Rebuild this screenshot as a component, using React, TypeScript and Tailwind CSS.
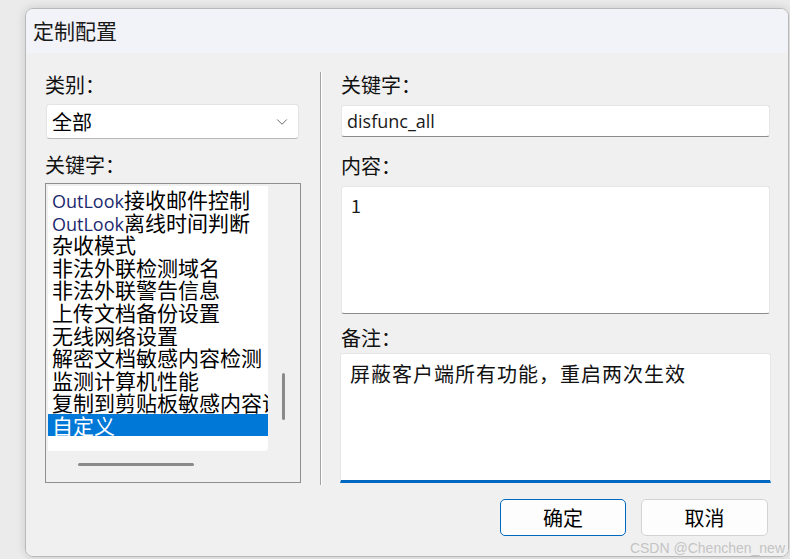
import { ChevronDown } from 'lucide-react';

const listItems: { latin?: string; text: string }[] = [
  { latin: 'OutLook', text: '接收邮件控制' },
  { latin: 'OutLook', text: '离线时间判断' },
  { text: '杂收模式' },
  { text: '非法外联检测域名' },
  { text: '非法外联警告信息' },
  { text: '上传文档备份设置' },
  { text: '无线网络设置' },
  { text: '解密文档敏感内容检测' },
  { text: '监测计算机性能' },
  { text: '复制到剪贴板敏感内容识别' },
];

function Label({ children, className = '' }: { children: React.ReactNode; className?: string }) {
  return <div className={`h-[26px] leading-[26px] text-[20px] text-[#111] ${className}`}>{children}</div>;
}

export default function App() {
  return (
    <div className="relative w-[790px] h-[559px] overflow-hidden bg-[#ebebeb] font-['Noto_Sans_CJK_SC',sans-serif]">
      <div className="ml-[25px] mt-[8px] w-[764px] h-[549px] rounded-[8px] border border-[#b9b9b9] overflow-hidden flex flex-col shadow-[0_0_10px_rgba(0,0,0,0.15)]">
        {/* Title bar */}
        <div className="h-[44px] shrink-0 bg-[#f1f3f8] pl-[7px] flex items-center text-[21px] text-[#1a1a1a]">
          定制配置
        </div>

        {/* Body */}
        <div className="flex-1 bg-[#f0f0f0] pl-[19px] pt-[19px] flex items-start">
          {/* Left column */}
          <div className="w-[256px] flex flex-col">
            <Label>类别：</Label>
            <div className="mt-[6px] ml-[1px] w-[253px] h-[35px] bg-white border border-[#e3e3e3] border-b-[#b8b8b8] rounded-[4px] flex items-center justify-between pl-[5px] pr-[7px]">
              <span className="text-[20px] text-black">全部</span>
              <ChevronDown size={18} strokeWidth={1.3} className="text-[#666]" />
            </div>
            <Label className="mt-[13px]">关键字：</Label>
            <div className="mt-[5px] h-[300px] border border-[#8f8f8f] bg-[#f0f0f0] p-[2px] flex flex-col">
              <div className="flex h-[265px]">
                <div className="w-[220px] bg-white rounded-br-[4px] overflow-hidden">
                  <div className="pt-[2px]">
                    {listItems.map((it, i) => (
                      <div key={i} className="h-[22.6px] leading-[22.6px] whitespace-nowrap text-[21px] text-black pl-[4px]">
                        {it.latin && <span className="font-['Open_Sans',sans-serif] text-[18px] text-[#1c2a6e]">{it.latin}</span>}
                        {it.text}
                      </div>
                    ))}
                    <div className="h-[22px] leading-[22px] bg-[#0078d7] text-white text-[21px] pl-[4px]">自定义</div>
                  </div>
                </div>
                <div className="flex-1 relative">
                  <div className="absolute left-[14px] top-[187px] w-[3px] h-[47px] rounded-full bg-[#8a8a8a]" />
                </div>
              </div>
              <div className="flex-1 relative">
                <div className="absolute left-[30px] top-[12px] w-[116px] h-[3px] rounded-full bg-[#8a8a8a]" />
              </div>
            </div>
          </div>

          {/* Separator */}
          <div className="ml-[19px] w-[1px] h-[413px] bg-[#a3a3a3] border-r border-white box-content" />

          {/* Right column */}
          <div className="ml-[19px] w-[429px] flex flex-col">
            <Label>关键字：</Label>
            <div className="mt-[7px] h-[32px] bg-white border border-[#e6e6e6] border-b-[#8c8c8c] rounded-[3px] flex items-center pl-[5px]">
              <span className="font-['Open_Sans',sans-serif] text-[18px] text-[#1a1a1a]">disfunc_all</span>
            </div>
            <Label className="mt-[16px]">内容：</Label>
            <div className="mt-[7px] h-[128px] bg-white border border-[#e6e6e6] border-b-[#8c8c8c] rounded-[3px] pl-[9px] pt-[5px]">
              <span className="text-[18px] text-[#1a1a1a]">1</span>
            </div>
            <Label className="mt-[11px]">备注：</Label>
            <div className="mt-[2px] -ml-[1px] w-[431px] h-[130px] bg-white border border-[#e6e6e6] border-b-[3px] border-b-[#0067c0] rounded-t-[3px] pl-[9px] pt-[5px]">
              <span className="text-[20px] tracking-[1px] text-[#111]">屏蔽客户端所有功能，重启两次生效</span>
            </div>
            <div className="mt-[16px] mr-[2px] flex justify-end gap-[15px]">
              <button className="w-[126px] h-[37px] rounded-[5px] bg-[#fdfdfd] border-[1.5px] border-[#0067c0] text-[20px] text-black">
                确定
              </button>
              <button className="w-[127px] h-[37px] rounded-[5px] bg-[#fdfdfd] border border-[#d3d3d3] text-[20px] text-black">
                取消
              </button>
            </div>
          </div>
        </div>
      </div>

      {/* Watermark */}
      <div className="absolute right-[5px] bottom-[4px] font-['Liberation_Sans',sans-serif] text-[14px] text-[#c4c4c4] leading-none">
        CSDN @Chenchen_new
      </div>
    </div>
  );
}
